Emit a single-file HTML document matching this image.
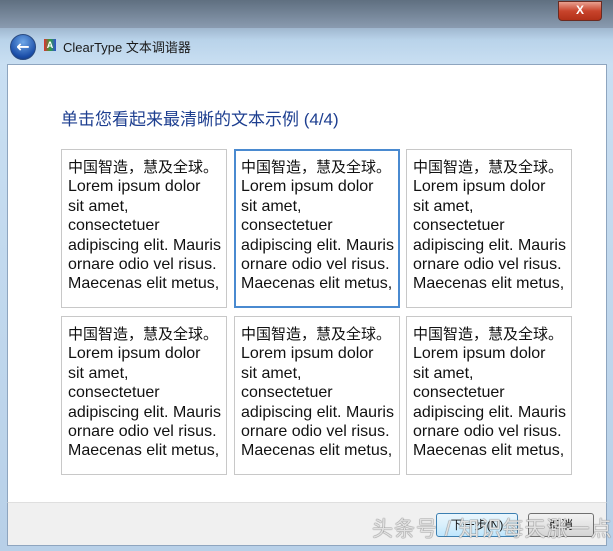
<!DOCTYPE html><html><head><meta charset="utf-8"><style>
body{margin:0;width:613px;height:551px;overflow:hidden;font-family:"Liberation Sans","Noto Sans CJK SC",sans-serif;background:linear-gradient(#6b7f95 0,#8fa5bd 20px,#b9d3ea 40px,#c9dff2 64px,#b8d0e8 100%);position:relative}
.title{position:absolute;left:0;top:0;width:613px;height:28px;background:linear-gradient(#5f6f80,#8a9bb0)}
.x{position:absolute;left:558px;top:1px;width:42px;height:18px;border-radius:0 0 4px 4px;background:linear-gradient(#e8a090,#c8442c 50%,#b23018);border:1px solid #6a2a20;color:#fff;font:bold 12px "Liberation Sans";text-align:center;line-height:17px}
.back{position:absolute;left:10px;top:34px;width:24px;height:24px;border-radius:50%;background:radial-gradient(circle at 50% 30%,#6fa8e8,#1b4ea8 70%,#0c2f70);border:1px solid #2a4a80;color:#fff;font:bold 16px "DejaVu Sans";text-align:center;line-height:23px}
.ico{position:absolute;left:44px;top:39px;width:12px;height:12px;background:linear-gradient(90deg,#e03030,#30a040,#3050d0);color:#fff;font:bold 9px "Liberation Sans";text-align:center;line-height:12px}
.ttl{position:absolute;left:63px;top:37px;font-size:13px;color:#1a1a1a}
.main{position:absolute;left:7px;top:64px;width:598px;height:437px;background:#fff;border:1px solid #8ea5bf;border-bottom:none}
.band{position:absolute;left:7px;top:502px;width:598px;height:42px;background:#f0f0f0;border:1px solid #8ea5bf;border-top:1px solid #dfdfdf}
h1{position:absolute;left:61px;top:105px;margin:0;font-weight:normal;font-size:17px;color:#1e3f90;white-space:nowrap}
.c{position:absolute;width:166px;height:159px;border:1px solid #c8c8c8;padding:8px 0 0 6px;box-sizing:border-box;font-size:16px;color:#111;overflow:hidden;white-space:nowrap}
.c div{height:19.4px;line-height:19.4px}
.c div:first-child{font-size:15px}
.c.s{border:2px solid #4a8ad0;padding:7px 0 0 5px}
.btn{position:absolute;top:513px;height:22px;border:1px solid #707070;border-radius:3px;background:linear-gradient(#f2f2f2,#e4e4e4 50%,#d4d4d4);font-size:12px;text-align:center;line-height:22px;color:#111}
.wm{position:absolute;left:372px;top:513px;font-size:21px;color:rgba(255,255,255,.8);text-shadow:0 0 1px #666,0 0 1px #666;letter-spacing:1px}
</style></head><body>
<div class="title"></div><div class="x">X</div>
<div class="back">←</div><div class="ico">A</div><div class="ttl">ClearType 文本调谐器</div>
<div class="main"></div><div class="band"></div>
<h1>单击您看起来最清晰的文本示例 (4/4)</h1>
<div class="c" style="left:61px;top:149px"><div>中国智造，慧及全球。</div><div>Lorem ipsum dolor</div><div>sit amet,</div><div>consectetuer</div><div>adipiscing elit. Mauris</div><div>ornare odio vel risus.</div><div>Maecenas elit metus,</div></div>
<div class="c s" style="left:234px;top:149px"><div>中国智造，慧及全球。</div><div>Lorem ipsum dolor</div><div>sit amet,</div><div>consectetuer</div><div>adipiscing elit. Mauris</div><div>ornare odio vel risus.</div><div>Maecenas elit metus,</div></div>
<div class="c" style="left:406px;top:149px"><div>中国智造，慧及全球。</div><div>Lorem ipsum dolor</div><div>sit amet,</div><div>consectetuer</div><div>adipiscing elit. Mauris</div><div>ornare odio vel risus.</div><div>Maecenas elit metus,</div></div>
<div class="c" style="left:61px;top:316px"><div>中国智造，慧及全球。</div><div>Lorem ipsum dolor</div><div>sit amet,</div><div>consectetuer</div><div>adipiscing elit. Mauris</div><div>ornare odio vel risus.</div><div>Maecenas elit metus,</div></div>
<div class="c" style="left:234px;top:316px"><div>中国智造，慧及全球。</div><div>Lorem ipsum dolor</div><div>sit amet,</div><div>consectetuer</div><div>adipiscing elit. Mauris</div><div>ornare odio vel risus.</div><div>Maecenas elit metus,</div></div>
<div class="c" style="left:406px;top:316px"><div>中国智造，慧及全球。</div><div>Lorem ipsum dolor</div><div>sit amet,</div><div>consectetuer</div><div>adipiscing elit. Mauris</div><div>ornare odio vel risus.</div><div>Maecenas elit metus,</div></div>
<div class="btn" style="left:436px;width:80px;border-color:#3c7fb1;background:linear-gradient(#eaf6fd,#d9f0fc 50%,#bee6fd)">下一步(N)</div>
<div class="btn" style="left:528px;width:64px">取消</div>
<div class="wm">头条号 / 知识每天涨一点</div>
</body></html>
